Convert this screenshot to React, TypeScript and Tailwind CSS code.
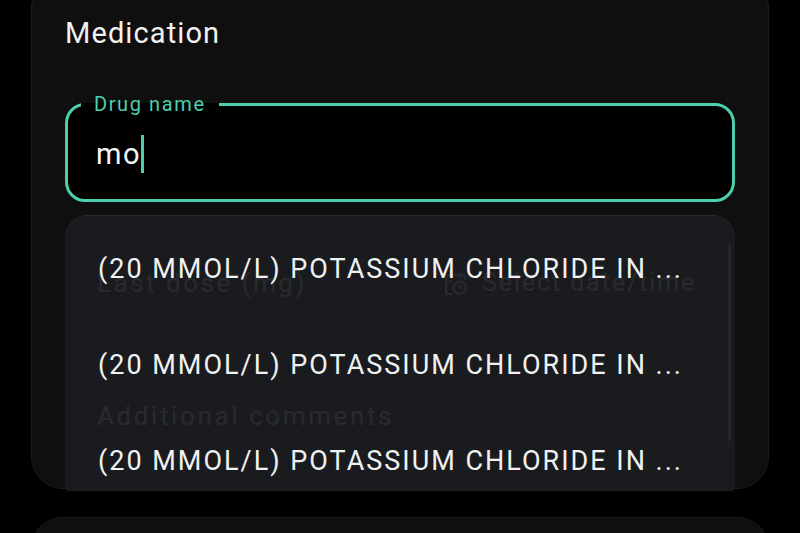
import { CalendarClock } from 'lucide-react'

const suggestions = [
  '(20 MMOL/L) POTASSIUM CHLORIDE IN ...',
  '(20 MMOL/L) POTASSIUM CHLORIDE IN ...',
  '(20 MMOL/L) POTASSIUM CHLORIDE IN ...',
]

export default function App() {
  return (
    <div className="w-[800px] h-[533px] bg-black overflow-hidden font-['Roboto',sans-serif] text-white">
      {/* Medication card */}
      <div className="relative mx-[31px] mt-[-24px] h-[513px] rounded-[32px] bg-[#0f0f10] border border-[#1c1c1e] pt-[39px] px-[33px]">
        <h2 className="text-[29px] leading-[35px] tracking-[1.1px] text-[#f2f2f2]">Medication</h2>

        <fieldset className="mt-[42px] m-0 border-[3px] border-[#4ccfac] rounded-[20px] bg-black p-0 pb-[26px]">
          <legend className="ml-[13px] px-[13px] text-[20px] leading-[22px] tracking-[1.6px] text-[#4ccfac]">Drug name</legend>
          <div className="flex items-center h-[38px] mt-[20px] pl-[28px] text-[29px] leading-[36px] tracking-[1.5px] text-[#f4f4f4]">
            mo
            <span className="inline-block w-[3px] h-[38px] bg-[#4ccfac]" />
          </div>
        </fieldset>

        {/* form fields behind the popup */}
        <div className="flex items-center mt-[66px] pl-[32px] h-[30px]">
          <span className="w-[346px] text-[26px] leading-[30px] tracking-[2.5px] text-[#858588]">Last dose (mg)</span>
          <span className="flex items-center gap-[14px] text-[25px] tracking-[1.9px] text-[#858588]">
            <CalendarClock size={25} strokeWidth={2} />
            Select date/time
          </span>
        </div>
        <div className="mt-[103px] pl-[32px] text-[26px] leading-[30px] tracking-[2.6px] text-[#858588]">Additional comments</div>

        {/* suggestions popup */}
        <div className="absolute left-[33px] top-[238px] w-[670px] h-[276px] rounded-t-[22px] rounded-b-[4px] bg-[#1d1e21]/[0.88] border-t border-[#2a2b2e] pt-[5px] overflow-hidden">
          {suggestions.map((s, i) => (
            <div key={i} className="h-[96px] flex items-center pl-[33px] text-[27px] tracking-[2px] text-[#f1f1f1] whitespace-nowrap">
              {s}
            </div>
          ))}
          <div className="absolute right-[4px] top-[28px] w-[3px] h-[197px] rounded-full bg-[#26272b]" />
        </div>
      </div>

      {/* next card */}
      <div className="mx-[31px] mt-[28px] h-[60px] rounded-t-[32px] bg-[#0f0f10] border-t border-x border-[#1c1c1e]" />
    </div>
  )
}
